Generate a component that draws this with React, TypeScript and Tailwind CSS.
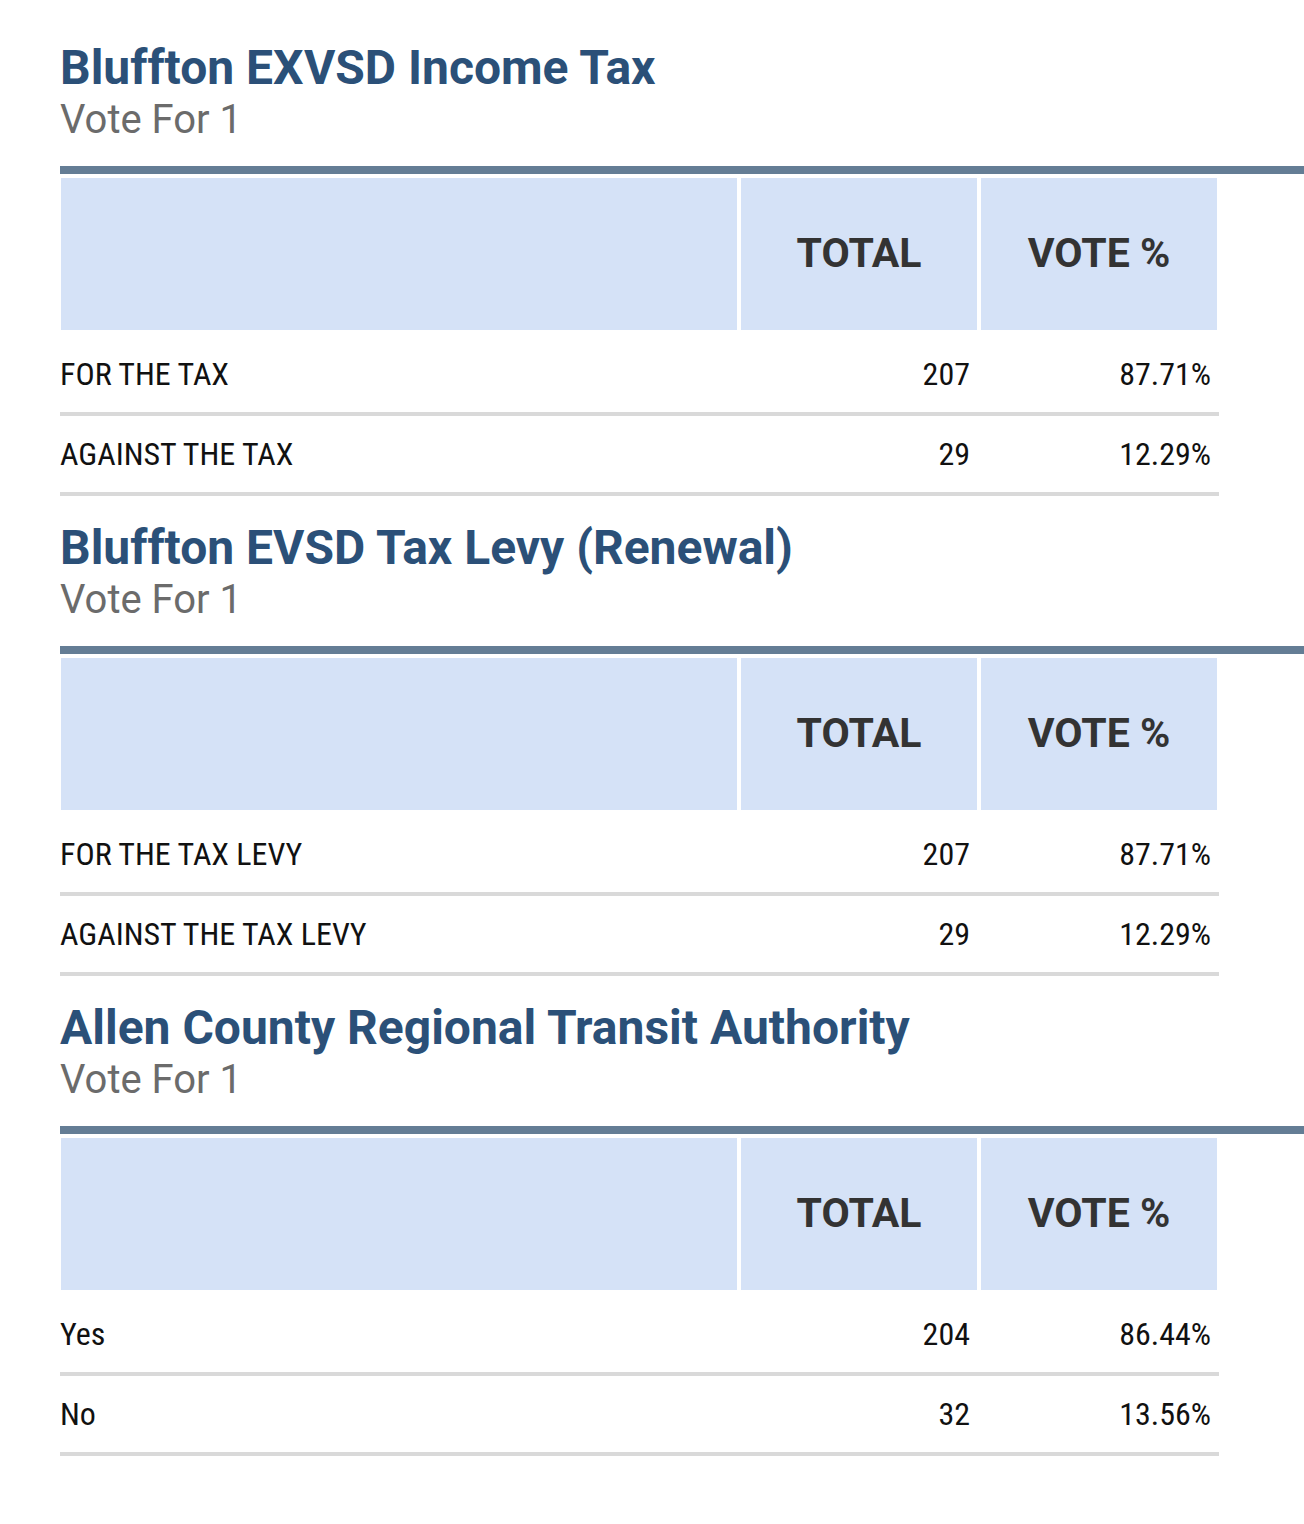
const races = [
  {
    title: 'Bluffton EXVSD Income Tax',
    rows: [
      { name: 'FOR THE TAX', total: '207', pct: '87.71%' },
      { name: 'AGAINST THE TAX', total: '29', pct: '12.29%' },
    ],
  },
  {
    title: 'Bluffton EVSD Tax Levy (Renewal)',
    rows: [
      { name: 'FOR THE TAX LEVY', total: '207', pct: '87.71%' },
      { name: 'AGAINST THE TAX LEVY', total: '29', pct: '12.29%' },
    ],
  },
  {
    title: 'Allen County Regional Transit Authority',
    rows: [
      { name: 'Yes', total: '204', pct: '86.44%' },
      { name: 'No', total: '32', pct: '13.56%' },
    ],
  },
];

export default function App() {
  return (
    <div className="w-[1304px] min-h-[1524px] bg-white pl-[60px] pt-[40px] flex flex-col gap-6 font-['Roboto',sans-serif] overflow-hidden">
      {races.map((race) => (
        <section key={race.title}>
          <h2 className="text-[48px] leading-[56px] font-bold text-[#2b5078] whitespace-nowrap">{race.title}</h2>
          <div className="text-[40px] leading-[48px] text-[#6b6b6b]">Vote For 1</div>

          <div className="mt-[22px] h-2 bg-[#647d95] w-[1244px]" />

          {/* Header cells */}
          <div className="flex gap-1 mt-1 pl-px w-[1158px] h-[152px]">
            <div className="w-[676px] bg-[#d5e2f7]" />
            <div className="w-[236px] bg-[#d5e2f7] flex items-center justify-center text-[41px] font-bold text-[#333333]">
              TOTAL
            </div>
            <div className="w-[236px] bg-[#d5e2f7] flex items-center justify-center text-[41px] font-bold text-[#333333]">
              VOTE %
            </div>
          </div>

          <div className="mt-[6px]">
            {race.rows.map((row) => (
              <div
                key={row.name}
                className="flex items-center w-[1159px] h-[80px] border-b-4 border-[#d9d9d9] text-[32px] text-[#111111] font-['Roboto_Condensed','Liberation_Sans_Narrow','Roboto',sans-serif]"
              >
                <div className="w-[681px]">{row.name}</div>
                <div className="w-[235px] text-right pr-[6px]">{row.total}</div>
                <div className="w-[240px] text-right pr-[5px]">{row.pct}</div>
              </div>
            ))}
          </div>
        </section>
      ))}
    </div>
  );
}
